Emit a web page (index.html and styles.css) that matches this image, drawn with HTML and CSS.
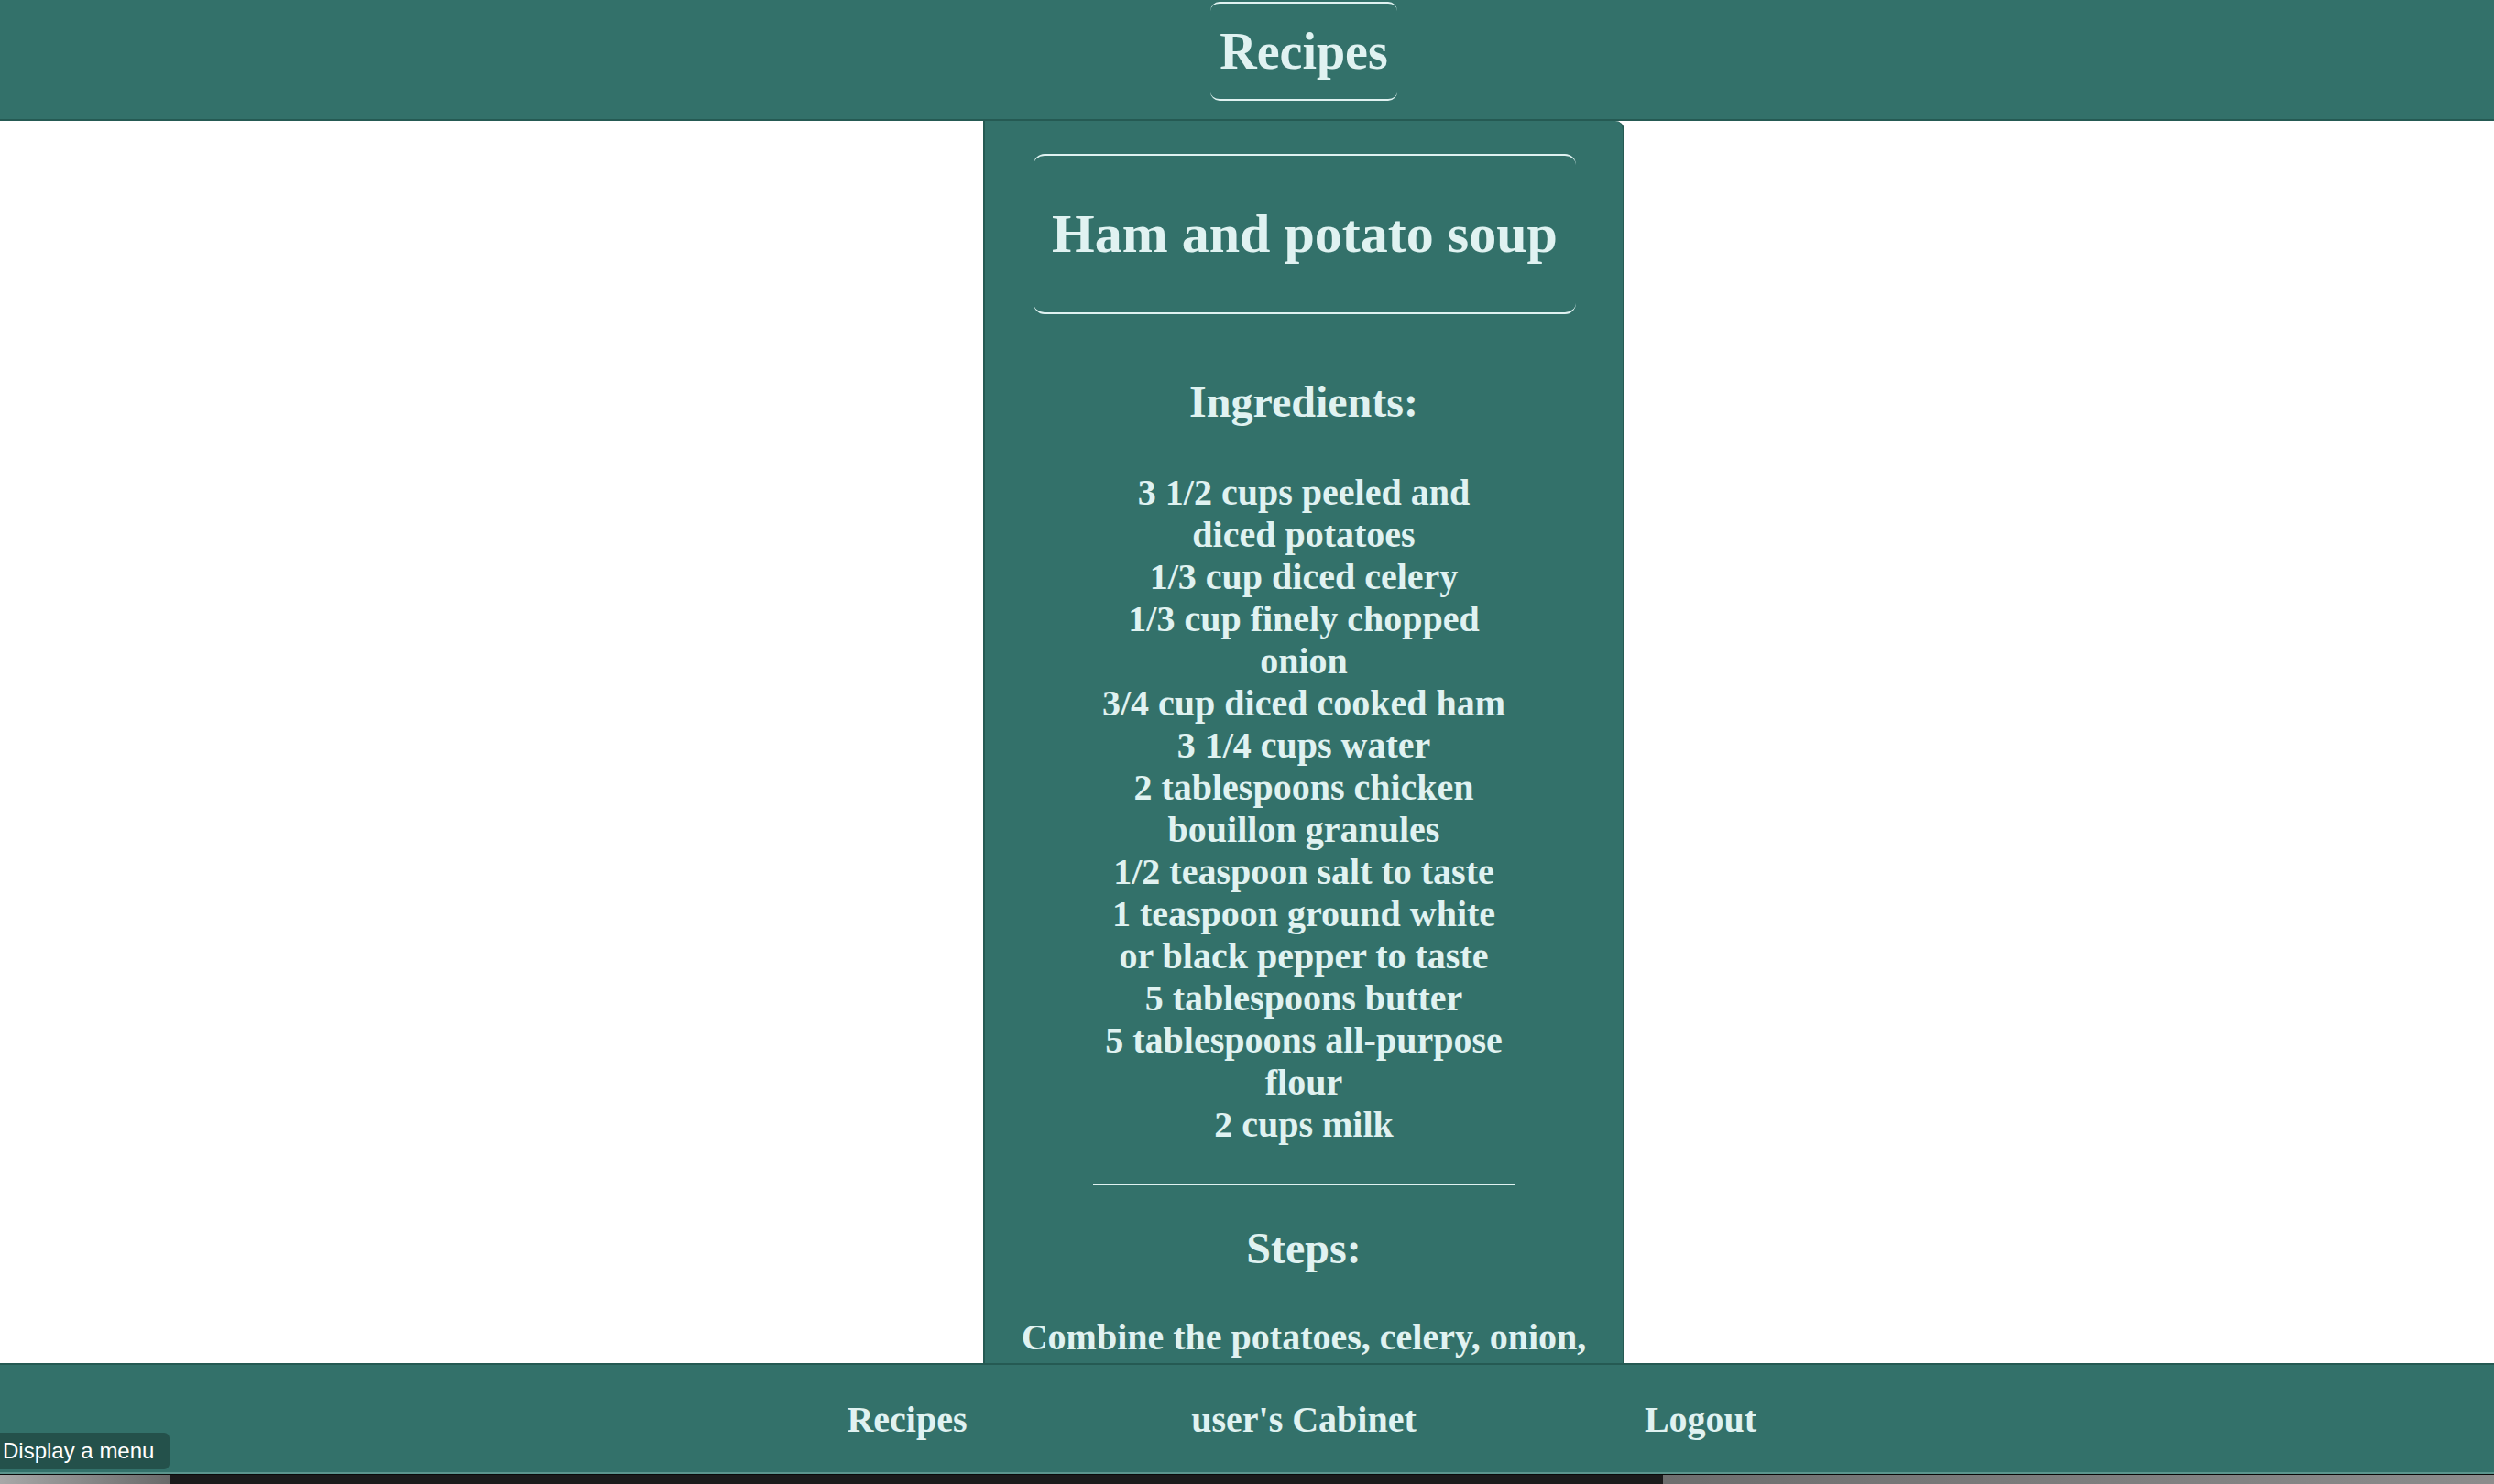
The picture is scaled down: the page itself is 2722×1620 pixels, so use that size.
FILE: index.html
```html
<!DOCTYPE html>
<html lang="en">
<head>
<meta charset="utf-8">
<title>Recipes</title>
<link rel="stylesheet" href="styles.css">
</head>
<body>
<header class="topbar">
  <a class="brand" href="#">Recipes</a>
</header>
<main class="main">
  <article class="card">
    <div class="title-box"><h2 class="title">Ham and potato soup</h2></div>
    <h3 class="section-title">Ingredients:</h3>
    <ul class="ingredients">
      <li>3 1/2 cups peeled and diced potatoes</li>
      <li>1/3 cup diced celery</li>
      <li>1/3 cup finely chopped onion</li>
      <li>3/4 cup diced cooked ham</li>
      <li>3 1/4 cups water</li>
      <li>2 tablespoons chicken bouillon granules</li>
      <li>1/2 teaspoon salt to taste</li>
      <li>1 teaspoon ground white or black pepper to taste</li>
      <li>5 tablespoons butter</li>
      <li>5 tablespoons all-purpose flour</li>
      <li>2 cups milk</li>
    </ul>
    <h3 class="section-title steps-title">Steps:</h3>
    <p class="steps">Combine the potatoes, celery, onion, ham and water in a stockpot. Bring to a boil, then reduce heat to medium. Cover, and cook until potatoes are tender, about 10 to 15 minutes. Stir in the chicken granules, salt and pepper.</p>
  </article>
</main>
<footer class="footer">
  <nav class="footer-nav">
    <a href="#" class="footer-link">Recipes</a>
    <a href="#" class="footer-link">user's Cabinet</a>
    <a href="#" class="footer-link">Logout</a>
  </nav>
  <div class="dock">
    <span class="dock-left"></span>
    <span class="dock-mid"></span>
    <span class="dock-right"></span>
  </div>
</footer>
<div class="tooltip">Display a menu</div>
</body>
</html>
```

FILE: styles.css
```css
html, body {
  margin: 0;
  padding: 0;
  overflow: hidden;
  height: 100%;
}
body {
  background: #ffffff;
  font-family: "Liberation Serif", "Times New Roman", serif;
  font-weight: bold;
  color: #e0f2f1;
}
a {
  color: #e0f2f1;
  text-decoration: none;
}
.topbar {
  background: #33716a;
  border-bottom: 2px solid #255a53;
  height: 128px;
  padding: 2px 0 0 124px;
  display: flex;
  justify-content: center;
  align-items: flex-start;
}
.brand {
  display: block;
  font-size: 56px;
  line-height: 64px;
  padding: 20px 10px 20px;
  border-top: 2px solid #e0f2f1;
  border-bottom: 2px solid #e0f2f1;
  border-radius: 10px;
}
.main {
  padding-left: 124px;
  display: flex;
  justify-content: center;
}
.card {
  width: 696px;
  background: #33716a;
  border-left: 2px solid #255a53;
  border-right: 2px solid #255a53;
  border-top-right-radius: 10px;
  padding: 36px 0 300px;
  text-align: center;
}
.title-box {
  margin: 0 51px 0 53px;
  border-top: 2px solid #e0f2f1;
  border-bottom: 2px solid #e0f2f1;
  border-radius: 12px;
  padding: 51px 0 51px;
}
.title {
  margin: 0;
  font-size: 60px;
  line-height: 69px;
}
.section-title {
  margin: 68px 0 0;
  font-size: 48px;
  line-height: 55px;
}
.ingredients {
  list-style: none;
  width: 460px;
  margin: 49px auto 0;
  padding: 0 0 41px;
  border-bottom: 2px solid #e0f2f1;
  font-size: 40px;
  line-height: 46px;
}
.steps-title {
  margin-top: 41px;
}
.steps {
  margin: 47px 0 0;
  padding: 0 20px;
  font-size: 40px;
  line-height: 46px;
}
.footer {
  position: fixed;
  left: 0;
  right: 0;
  bottom: 0;
}
.footer-nav {
  background: #33716a;
  border-top: 2px solid #255a53;
  border-bottom: 2px solid #5b958d;
  height: 117px;
  padding-left: 124px;
  display: grid;
  grid-template-columns: 433px 433px 433px;
  justify-content: center;
  align-items: center;
}
.footer-link {
  justify-self: center;
  font-size: 40px;
  line-height: 46px;
  padding-top: 3px;
}
.dock {
  height: 10px;
  border-top: 1px solid #0a0a0a;
  background: #1b1b1b;
  display: flex;
}
.dock-left {
  width: 185px;
  background: linear-gradient(90deg, #a8a8a8, #6a6a6a);
}
.dock-mid {
  flex: 0 0 1630px;
}
.dock-right {
  flex: 1;
  background: linear-gradient(90deg, #6e6e6e, #8c8c8c);
}
.tooltip {
  position: fixed;
  left: 0;
  bottom: 16px;
  height: 40px;
  width: 182px;
  padding-left: 3px;
  background: #24514b;
  border-radius: 0 6px 6px 0;
  font-family: "Liberation Sans", Arial, sans-serif;
  font-weight: normal;
  font-size: 24px;
  line-height: 40px;
  color: #ffffff;
}
```
